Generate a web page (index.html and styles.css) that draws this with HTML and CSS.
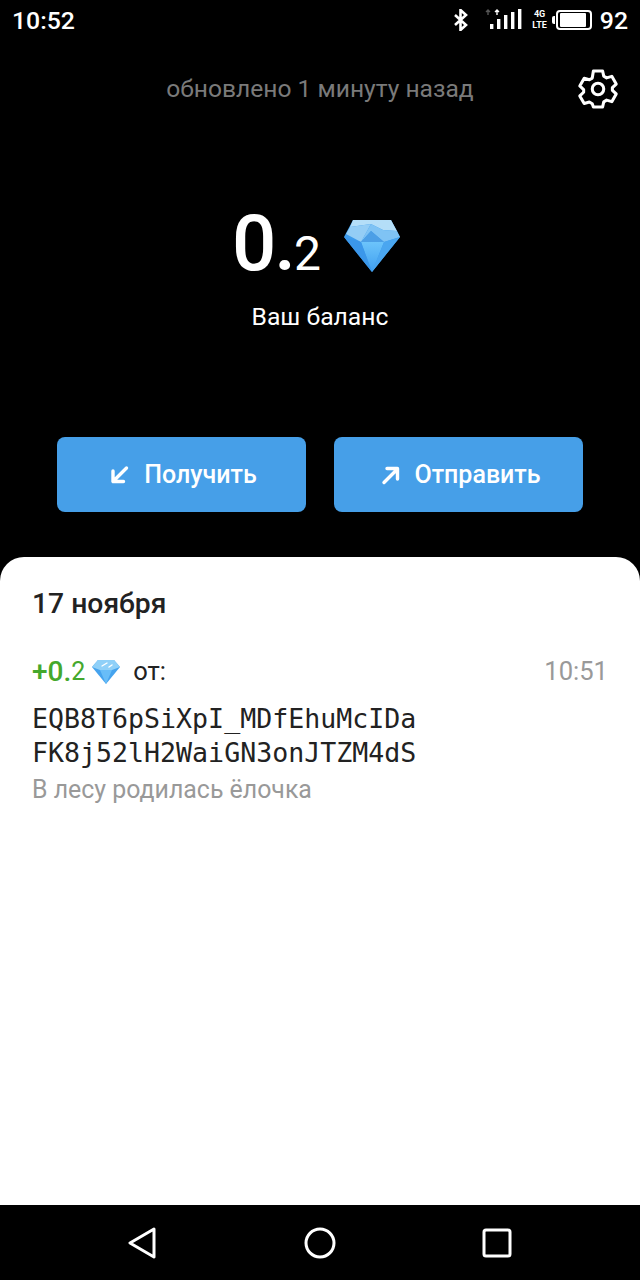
FILE: index.html
```html
<!DOCTYPE html>
<html lang="ru">
<head>
    <meta charset="UTF-8">
    <meta name="viewport" content="width=device-width, initial-scale=1.0">
    <title>Кошелёк</title>
    <link rel="stylesheet" href="styles.css">
</head>
<body>

<svg class="defs" width="0" height="0">
    <defs>
        <linearGradient id="gemBottom" x1="0" y1="0" x2="0" y2="1">
            <stop offset="0" stop-color="#6cc4fb"/>
            <stop offset="1" stop-color="#3f9ff0"/>
        </linearGradient>
        <symbol id="gem" viewBox="0 0 58 54">
            <polygon points="10,1 48,1 57,18 29,53 1,18" fill="#3d9bec"/>
            <polygon points="10,1 48,1 54,12 40,11 28,5 7,8" fill="#b4def8"/>
            <polygon points="7,8 28,5 18,23 3,15" fill="#94cdf5"/>
            <polygon points="28,5 40,11 54,12 57,18 41,23 28,12 18,23" fill="#7fc3f4"/>
            <polygon points="28,12 41,23 18,23" fill="#4c9fe6"/>
            <polygon points="18,23 41,23 29,53" fill="url(#gemBottom)"/>
            <polygon points="41,23 57,18 29,53" fill="#4aa6f0"/>
            <polygon points="1,18 18,23 29,53" fill="#3b97ea"/>
        </symbol>
        <symbol id="gemSmall" viewBox="0 0 28 25">
            <polygon points="6,1 22,1 28,8 14,25 0,8" fill="#45a3ee"/>
            <polygon points="6,1 22,1 28,8 20,11 8,11 0,8" fill="#8fd0f8"/>
            <polygon points="8,11 20,11 14,25" fill="#68bdf8"/>
            <path d="M10 7l5-3M17 8l3-2" stroke="#fff" stroke-width="1.4" stroke-linecap="round"/>
        </symbol>
    </defs>
</svg>

<div class="screen">
    <div class="top">
        <div class="statusbar">
            <span class="clock">10:52</span>
            <div class="status-icons">
                <svg class="ic-bt" width="18" height="22" viewBox="0 0 18 22">
                    <path d="M3 6l11 10-5.500 5V1L14 6 3 16" fill="none" stroke="#fff" stroke-width="2.6"/>
                </svg>
                <svg class="ic-signal" width="38" height="24" viewBox="0 0 38 24">
                    <path d="M3 7V2M1 4l2-2 2 2" fill="none" stroke="#555" stroke-width="1.4"/>
                    <path d="M12 7V2M10 4l2-2 2 2" fill="none" stroke="#fff" stroke-width="1.4"/>
                    <rect x="5" y="16" width="3.4" height="5" fill="#fff"/>
                    <rect x="12" y="11" width="3.4" height="10" fill="#fff"/>
                    <rect x="19" y="7" width="3.4" height="14" fill="#fff"/>
                    <rect x="26" y="4" width="3.4" height="17" fill="#fff"/>
                    <rect x="33" y="1" width="3.4" height="20" fill="#fff"/>
                </svg>
                <div class="net"><span>4G</span><span>LTE</span></div>
                <div class="battery"><div class="battery-cap"></div><div class="battery-body"><div class="battery-fill"></div></div></div>
                <span class="percent">92</span>
            </div>
        </div>

        <div class="updated-row">
            <span></span>
            <span class="updated">обновлено 1 минуту назад</span>
            <svg class="gear" width="46" height="46" viewBox="0 0 24 24" fill="none" stroke="#fff" stroke-width="1.6" stroke-linejoin="round">
                <circle cx="12" cy="12" r="3"/>
                <path d="M9.600 2.600h4.800l.6 2.700 1.500.9 2.700-.8 2.300 4-2 1.900v1.400l2 1.900-2.300 4-2.700-.8-1.500.9-.6 2.700H9.600L9 19.700l-1.500-.9-2.700.8-2.300-4 2-1.900v-1.400l-2-1.900 2.300-4 2.700.8 1.500-.9z"/>
            </svg>
        </div>

        <div class="balance">
            <span class="big">0.</span><span class="small">2</span>
            <svg class="gem-big" width="58" height="54"><use href="#gem"/></svg>
        </div>
        <div class="balance-label">Ваш баланс</div>

        <div class="actions">
            <div class="button">
                <svg width="22" height="22" viewBox="0 0 22 22" fill="none" stroke="#fff" stroke-width="3.4" stroke-linecap="round" stroke-linejoin="round">
                    <path d="M18.500 4L5 17.500M5 7v10.500h10.500"/>
                </svg>
                Получить
            </div>
            <div class="button">
                <svg width="22" height="22" viewBox="0 0 22 22" fill="none" stroke="#fff" stroke-width="3.4" stroke-linecap="round" stroke-linejoin="round">
                    <path d="M6 18.500L19.500 5M9 4.500H19.500V15"/>
                </svg>
                Отправить
            </div>
        </div>
    </div>

    <div class="sheet">
        <div class="date">17 ноября</div>
        <div class="tx-head">
            <div class="tx-amount">
                <span class="plus">+0.</span><span class="plus-small">2</span>
                <svg class="gem-small" width="28" height="25"><use href="#gemSmall"/></svg>
                <span class="from">от:</span>
            </div>
            <span class="tx-time">10:51</span>
        </div>
        <div class="address">EQB8T6pSiXpI_MDfEhuMcIDa<br>FK8j52lH2WaiGN3onJTZM4dS</div>
        <div class="comment">В лесу родилась ёлочка</div>
    </div>

    <div class="navbar">
        <svg width="30" height="32" viewBox="0 0 30 32" fill="none" stroke="#fff" stroke-width="3" stroke-linejoin="round">
            <path d="M26 2L2 16l24 14z"/>
        </svg>
        <svg width="32" height="32" viewBox="0 0 32 32" fill="none" stroke="#fff" stroke-width="3">
            <circle cx="16" cy="16" r="14"/>
        </svg>
        <svg width="30" height="30" viewBox="0 0 30 30" fill="none" stroke="#fff" stroke-width="3" stroke-linejoin="round">
            <rect x="2" y="2" width="26" height="26" rx="2"/>
        </svg>
    </div>
</div>

</body>
</html>
```

FILE: styles.css
```css
body {
    font-family: Roboto, "Liberation Sans", sans-serif;
    margin: 0;
    padding: 0;
    background-color: #000;
}
.defs {
    display: block;
    height: 0;
}
.screen {
    width: 640px;
    height: 1280px;
    display: flex;
    flex-direction: column;
    overflow: hidden;
}
.top {
    height: 557px;
    flex: none;
    color: #fff;
}
.statusbar {
    height: 40px;
    display: flex;
    justify-content: space-between;
    align-items: center;
    padding: 0 12px;
}
.clock, .percent {
    font-size: 24.8px;
    font-weight: 500;
}
.status-icons {
    display: flex;
    align-items: center;
}
.ic-bt {
    margin-right: 15px;
}
.ic-signal {
    margin-right: 9px;
}
.net {
    display: flex;
    flex-direction: column;
    align-items: center;
    font-size: 9px;
    line-height: 11px;
    font-weight: 700;
    margin-right: 5px;
}
.battery {
    display: flex;
    align-items: center;
    margin-right: 8px;
}
.battery-cap {
    width: 3px;
    height: 8px;
    background-color: #fff;
    border-radius: 2px 0 0 2px;
    margin-right: 1px;
}
.battery-body {
    box-sizing: border-box;
    width: 36px;
    height: 20px;
    border: 2px solid #fff;
    border-radius: 4px;
    padding: 1px 2px;
}
.battery-fill {
    height: 100%;
    width: 92%;
    background-color: #fff;
    border-radius: 1px;
}
.updated-row {
    display: grid;
    grid-template-columns: 1fr auto 1fr;
    align-items: center;
    height: 46px;
    margin-top: 26px;
    padding-right: 19px;
}
.updated {
    font-size: 24.6px;
    color: #7a7a7a;
    margin-left: 19px;
    margin-top: -2px;
}
.gear {
    justify-self: end;
}
.balance {
    display: flex;
    justify-content: center;
    align-items: baseline;
    margin-top: 88px;
    padding-right: 7px;
    height: 88px;
    line-height: 88px;
}
.big {
    font-size: 78px;
    font-weight: 500;
    letter-spacing: -2px;
}
.small {
    font-size: 48px;
    font-weight: 400;
}
.gem-big {
    align-self: center;
    margin-left: 22px;
    margin-top: 4px;
}
.balance-label {
    text-align: center;
    font-size: 24.7px;
    line-height: 28px;
    margin-top: 15px;
}
.actions {
    display: flex;
    justify-content: center;
    gap: 28px;
    margin-top: 106px;
}
.button {
    box-sizing: border-box;
    width: 249px;
    height: 75px;
    padding-left: 2px;
    background-color: #469fe8;
    border-radius: 8px;
    display: flex;
    justify-content: center;
    align-items: center;
    gap: 14px;
    font-size: 25px;
    font-weight: 500;
}
.sheet {
    flex: 1;
    background-color: #fff;
    border-radius: 24px 24px 0 0;
    padding: 30px 32px 0;
    color: #222;
}
.date {
    font-size: 28.3px;
    font-weight: 500;
    line-height: 34px;
}
.tx-head {
    display: flex;
    justify-content: space-between;
    align-items: center;
    margin-top: 33px;
    height: 34px;
}
.tx-amount {
    display: flex;
    align-items: center;
}
.plus {
    font-size: 28px;
    font-weight: 500;
    color: #44a82c;
}
.plus-small {
    font-size: 25px;
    color: #44a82c;
}
.gem-small {
    margin-left: 7px;
}
.from {
    font-size: 25.5px;
    margin-left: 13px;
}
.tx-time {
    font-size: 25.6px;
    color: #999;
}
.address {
    font-family: "DejaVu Sans Mono", "Liberation Mono", monospace;
    font-size: 26.6px;
    line-height: 34px;
    margin-top: 14px;
}
.comment {
    font-size: 24.9px;
    color: #999;
    margin-top: 5px;
}
.navbar {
    height: 75px;
    flex: none;
    background-color: #000;
    display: flex;
    justify-content: space-between;
    align-items: center;
    padding: 0 128px;
}
```
